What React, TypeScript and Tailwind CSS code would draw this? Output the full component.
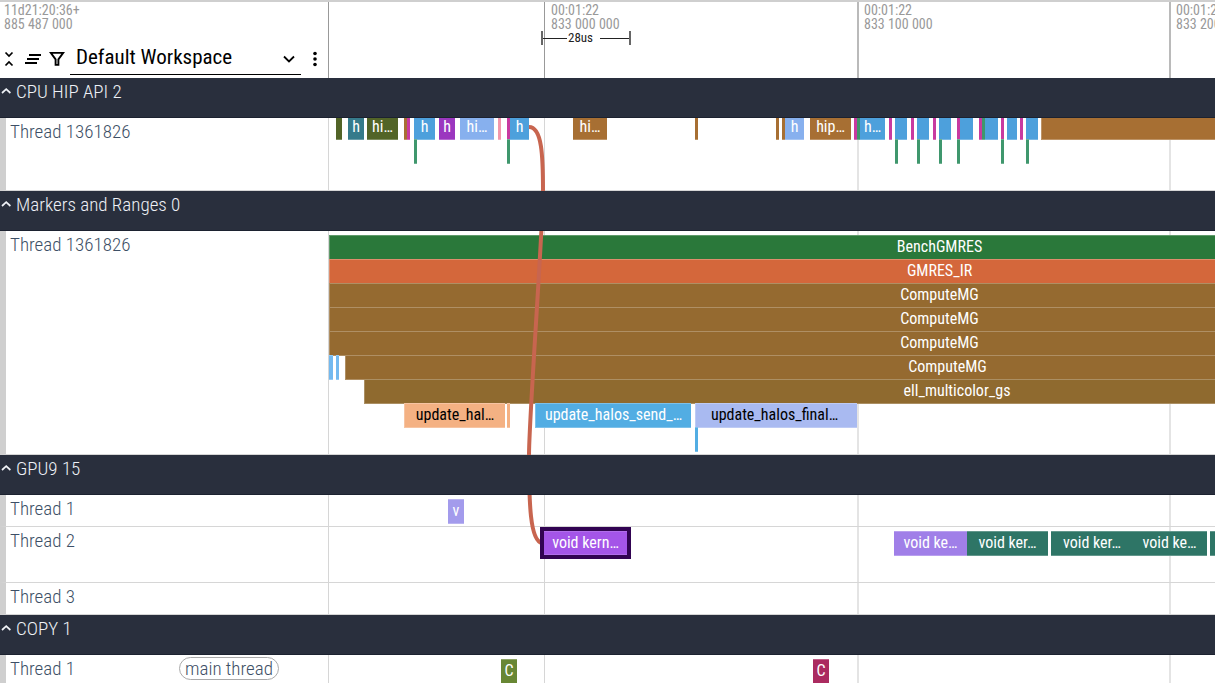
import React from "react";

import { clsx } from "clsx";

type Slice = {
  // left edge and width on the time axis, in pixels
  x: number;
  w: number;
  color: string;
  depth?: number;
  name?: string;
  dark?: boolean;
  selected?: boolean;
};

type Track = {
  title: string;
  height: string;
  chip?: string;
  scrolled?: boolean;
  slices: Slice[];
};

type Group = {
  title: string;
  tracks: Track[];
};

const olive = "bg-[#526427]";
const brown = "bg-[#a76f33]";
const magenta = "bg-[#c83aa0]";
const blue = "bg-[#4da0dc]";
const periwinkle = "bg-[#87b0ee]";
const green = "bg-[#3f976d]";
const range = "bg-[#956a30]";
const sky = "bg-[#52ade3]";
const lavender = "bg-[#a9baf1]";
const pine = "bg-[#2e7566]";

const groups: Group[] = [
  {
    title: "CPU HIP API 2",
    tracks: [
      {
        title: "Thread 1361826",
        height: "h-[73px]",
        scrolled: true,
        slices: [
          { x: 7, w: 6, color: olive },
          { x: 19, w: 16, color: "bg-[#367b8b]", name: "h" },
          { x: 38, w: 31, color: olive, name: "hi…" },
          { x: 75, w: 3, color: brown },
          { x: 78, w: 3, color: magenta },
          { x: 85, w: 21, color: blue, name: "h" },
          { x: 110, w: 16, color: "bg-[#9b37bf]", name: "h" },
          { x: 131, w: 34, color: periwinkle, name: "hi…" },
          { x: 169, w: 3, color: "bg-[#f297ab]" },
          { x: 178, w: 3, color: magenta },
          { x: 181, w: 19, color: blue, name: "h" },
          { x: 244, w: 34, color: brown, name: "hi…" },
          { x: 366, w: 3, color: brown },
          { x: 447, w: 3, color: brown },
          { x: 453, w: 4, color: brown },
          { x: 456, w: 19, color: periwinkle, name: "h" },
          { x: 481, w: 41, color: brown, name: "hip…" },
          { x: 525, w: 3, color: magenta },
          { x: 528, w: 3, color: green },
          { x: 531, w: 25, color: blue, name: "h…" },
          { x: 560, w: 3, color: magenta },
          { x: 566, w: 12, color: blue },
          { x: 582, w: 3, color: magenta },
          { x: 588, w: 12, color: blue },
          { x: 604, w: 3, color: magenta },
          { x: 610, w: 12, color: blue },
          { x: 628, w: 3, color: magenta },
          { x: 631, w: 13, color: blue },
          { x: 650, w: 3, color: magenta },
          { x: 653, w: 3, color: green },
          { x: 656, w: 13, color: blue },
          { x: 672, w: 3, color: magenta },
          { x: 678, w: 10, color: blue },
          { x: 691, w: 3, color: magenta },
          { x: 697, w: 12, color: blue },
          { x: 712, w: 508, color: brown },
          { x: 85, w: 3, color: green, depth: 1 },
          { x: 178, w: 3, color: green, depth: 1 },
          { x: 566, w: 3, color: green, depth: 1 },
          { x: 588, w: 3, color: green, depth: 1 },
          { x: 610, w: 3, color: green, depth: 1 },
          { x: 628, w: 3, color: green, depth: 1 },
          { x: 672, w: 3, color: green, depth: 1 },
          { x: 697, w: 3, color: green, depth: 1 }
        ]
      }
    ]
  },
  {
    title: "Markers and Ranges 0",
    tracks: [
      {
        title: "Thread 1361826",
        height: "h-[224px]",
        slices: [
          { x: 0, w: 1220, color: "bg-[#2a783a]", name: "BenchGMRES" },
          { x: 0, w: 1220, color: "bg-[#d4673b]", depth: 1, name: "GMRES_IR" },
          { x: 0, w: 1220, color: range, depth: 2, name: "ComputeMG" },
          { x: 0, w: 1220, color: range, depth: 3, name: "ComputeMG" },
          { x: 0, w: 1220, color: range, depth: 4, name: "ComputeMG" },
          { x: 0, w: 4, color: "bg-[#73b9ef]", depth: 5 },
          { x: 7, w: 3, color: "bg-[#73b9ef]", depth: 5 },
          { x: 16, w: 1204, color: range, depth: 5, name: "ComputeMG" },
          { x: 35, w: 1185, color: "bg-[#8f6a2f]", depth: 6, name: "ell_multicolor_gs" },
          { x: 75, w: 101, color: "bg-[#f4b183]", depth: 7, name: "update_hal…", dark: true },
          { x: 178, w: 3, color: "bg-[#f4b183]", depth: 7 },
          { x: 206, w: 156, color: sky, depth: 7, name: "update_halos_send_…" },
          { x: 366, w: 158, color: lavender, depth: 7, name: "update_halos_final…", dark: true },
          { x: 524, w: 4, color: lavender, depth: 7 },
          { x: 366, w: 3, color: sky, depth: 8 }
        ]
      }
    ]
  },
  {
    title: "GPU9 15",
    tracks: [
      {
        title: "Thread 1",
        height: "h-8",
        slices: [{ x: 119, w: 16, color: "bg-[#a39bec]", name: "v" }]
      },
      {
        title: "Thread 2",
        height: "h-14",
        slices: [
          { x: 215, w: 83, color: "bg-[#a455e8]", name: "void kern…", selected: true },
          { x: 565, w: 73, color: "bg-[#a07fe8]", name: "void ke…" },
          { x: 638, w: 81, color: pine, name: "void ker…" },
          { x: 722, w: 82, color: pine, name: "void ker…" },
          { x: 803, w: 75, color: pine, name: "void ke…" },
          { x: 881, w: 80, color: pine }
        ]
      },
      { title: "Thread 3", height: "h-8", slices: [] }
    ]
  },
  {
    title: "COPY 1",
    tracks: [
      {
        title: "Thread 1",
        height: "h-8",
        chip: "main thread",
        slices: [
          { x: 172, w: 16, color: "bg-[#688734]", name: "C" },
          { x: 484, w: 16, color: "bg-[#ab2b60]", name: "C" }
        ]
      }
    ]
  }
];

const ticks = [
  { x: 215, wide: false, time: "00:01:22", nanos: "833 000 000" },
  { x: 528, wide: true, time: "00:01:22", nanos: "833 100 000" },
  { x: 840, wide: true, time: "00:01:22", nanos: "833 200 000" }
];

function SliceBox({ slice, scrolled }: { slice: Slice; scrolled?: boolean }) {
  const top = (scrolled ? -3 : 4) + (slice.depth ?? 0) * 24;

  return (
    <div
      className={clsx(
        "absolute flex items-center justify-center overflow-hidden whitespace-nowrap border-y text-base leading-5",
        slice.w > 100 && "border-l",
        slice.color,
        slice.dark ? "text-black" : "text-white",
        slice.selected
          ? "z-20 h-6 border-white/15 outline-4 outline-[#310352]"
          : "h-[25px] border-white/25 pb-0.5"
      )}
      style={{ left: slice.x, top, width: slice.w }}
    >
      {slice.name}
    </div>
  );
}

function TrackRow({ track }: { track: Track }) {
  return (
    <div className={clsx("flex", track.height)}>
      <div className="flex w-[329px] shrink-0 items-start justify-between border-r border-b border-l-6 border-[#d6d6d6] border-l-[#cfcfcf] pr-[49px] pl-1 text-[19px] font-light text-[#3d4f66]">
        <span className="leading-7">{track.title}</span>
        {track.chip && (
          <span className="mt-0.5 rounded-full border border-[#aaaaaa] px-[5px] leading-[21px]">{track.chip}</span>
        )}
      </div>
      <div className="relative min-w-0 flex-1 overflow-hidden border-b border-[#d6d6d6]">
        {ticks.map((tick) => (
          <div
            key={tick.x}
            className={clsx("absolute inset-y-0", tick.wide ? "w-0.5 bg-[#e4e4e4]" : "w-px bg-[#d6d6d6]")}
            style={{ left: tick.x }}
          />
        ))}
        {track.slices.map((slice, index) => (
          <SliceBox key={index} slice={slice} scrolled={track.scrolled} />
        ))}
      </div>
    </div>
  );
}

function GroupHeader({ title }: { title: string }) {
  return (
    <button
      type="button"
      className="relative z-10 flex h-10 w-full items-start border-b border-[#1c2230] bg-[#292f3d] text-left text-[19px] font-light text-[#eef1f6]"
    >
      <svg className="mt-2 mr-[5px] ml-px size-[10px] shrink-0" viewBox="0 0 10 10" fill="none" stroke="currentColor" strokeWidth="1.7">
        <path d="M1 7 5.2 3.2 9.4 7" />
      </svg>
      <span className="leading-7">{title}</span>
    </button>
  );
}

function Toolbar() {
  return (
    <div className="flex h-[30px] items-center text-black">
      <button type="button" aria-label="Collapse all" className="ml-[3px]">
        <svg className="h-4 w-3" viewBox="0 0 12 16" fill="none" stroke="currentColor" strokeWidth="1.7">
          <path d="M2.5 1.5 6 5l3.5-3.5M2.5 14.5 6 11l3.5 3.5" />
        </svg>
      </button>
      <button type="button" aria-label="Sort tracks" className="ml-[9px]">
        <svg className="h-3 w-[18px]" viewBox="0 0 18 12" fill="none" stroke="currentColor" strokeWidth="1.8">
          <path d="M5 2h12M3 6h12M1 10h12" />
        </svg>
      </button>
      <button type="button" aria-label="Filter tracks" className="ml-[7px]">
        <svg className="size-4" viewBox="0 0 16 16" fill="none" stroke="currentColor" strokeWidth="1.9">
          <path d="M1.8 1.9h12.4L9.4 8.4v5.5H6.6V8.4z" />
        </svg>
      </button>
      <div className="relative ml-[5px]">
        <select
          aria-label="Workspace"
          className="h-8 w-[231px] appearance-none border-b border-black bg-transparent pb-0.5 pl-1.5 text-[21px] leading-[29px]"
        >
          <option>Default Workspace</option>
        </select>
        <svg
          className="pointer-events-none absolute top-[11px] right-1.5 h-2.5 w-3"
          viewBox="0 0 12 10"
          fill="none"
          stroke="currentColor"
          strokeWidth="1.8"
        >
          <path d="M1 2.5 6 7.5l5-5" />
        </svg>
      </div>
      <button type="button" aria-label="More options" className="ml-3">
        <svg className="h-4 w-1" viewBox="0 0 4 16" fill="currentColor">
          <circle cx="2" cy="2.5" r="1.8" />
          <circle cx="2" cy="8" r="1.8" />
          <circle cx="2" cy="13.5" r="1.8" />
        </svg>
      </button>
    </div>
  );
}

function TimeAxis() {
  return (
    <div className="relative min-w-0 flex-1 overflow-hidden">
      {ticks.map((tick) => (
        <div
          key={tick.x}
          className={clsx(
            "absolute inset-y-0 text-sm leading-[14px] whitespace-nowrap text-[#999999]",
            tick.wide ? "border-l-2 border-[#bababa] pl-[5px]" : "border-l border-[#999999] pl-1.5"
          )}
          style={{ left: tick.x }}
        >
          <p className="pt-px">{tick.time}</p>
          <p>{tick.nanos}</p>
        </div>
      ))}
      {/* Duration of the selected slice */}
      <div className="absolute top-[29px] left-[212px] flex h-[14px] w-[90px] items-center border-x-2 border-[#666666] text-[13px] leading-3 text-[#222222]">
        <span className="h-px w-6 bg-[#222222]" />
        <span className="flex-1 pl-px">28us</span>
        <span className="h-px w-[29px] bg-[#222222]" />
      </div>
    </div>
  );
}

export default function App() {
  return (
    <div className="h-screen overflow-hidden bg-white font-['Roboto_Condensed',Roboto,sans-serif]">
      <header className="flex h-[78px] border-t-2 border-[#cfcfcf]">
        <div className="flex w-[329px] shrink-0 flex-col border-r border-[#999999]">
          <div className="h-[42px] pt-px pl-1 text-sm leading-[14px] text-[#999999]">
            <p>11d21:20:36+</p>
            <p>885 487 000</p>
          </div>
          <Toolbar />
        </div>
        <TimeAxis />
      </header>

      <main className="relative">
        {groups.map((group) => (
          <section key={group.title}>
            <GroupHeader title={group.title} />
            {group.tracks.map((track) => (
              <TrackRow key={track.title} track={track} />
            ))}
          </section>
        ))}

        {/* Flow from the launch call to its kernel, passing behind the group headers */}
        <svg
          className="pointer-events-none absolute top-0 left-[329px] h-[605px] w-[400px]"
          viewBox="0 0 400 605"
          fill="none"
          stroke="#c8654f"
          strokeWidth="4"
        >
          <path d="M200 49C213 49 214 78 214 113C214 150 200 340 200 377C200 425 201 463 213 465" />
        </svg>
      </main>
    </div>
  );
}
